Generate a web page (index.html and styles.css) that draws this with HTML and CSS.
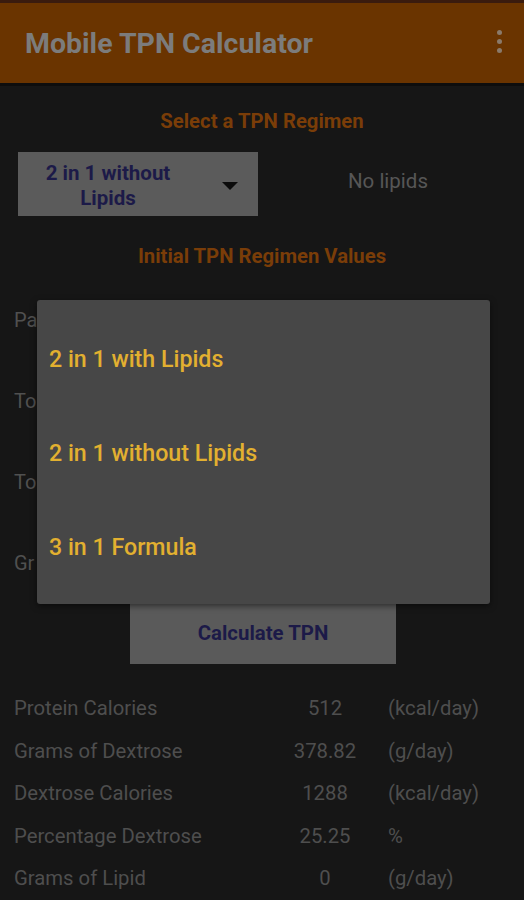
FILE: index.html
```html
<!DOCTYPE html>
<html>
<head>
<meta charset="utf-8">
<link rel="stylesheet" href="styles.css">
</head>
<body>
<div class="screen">
  <div class="statusbar"></div>
  <header class="appbar">
    <span class="title">Mobile TPN Calculator</span>
    <span class="menu"><i></i><i></i><i></i></span>
  </header>
  <div class="appbar-shadow"></div>
  <main class="content">
    <h2 class="section-title first">Select a TPN Regimen</h2>
    <div class="regimen-row">
      <div class="spinner">
        <span class="spinner-text">2 in 1 without<br>Lipids</span>
        <span class="caret"></span>
      </div>
      <div class="regimen-note">No lipids</div>
    </div>
    <h2 class="section-title second">Initial TPN Regimen Values</h2>
    <div class="inputs">
      <div class="input-row">Pa</div>
      <div class="input-row">To</div>
      <div class="input-row">To</div>
      <div class="input-row">Gr</div>
    </div>
    <div class="calc-wrap">
      <div class="calc-btn">Calculate TPN</div>
    </div>
    <div class="results">
      <div class="result"><span class="r-label">Protein Calories</span><span class="r-value">512</span><span class="r-unit">(kcal/day)</span></div>
      <div class="result"><span class="r-label">Grams of Dextrose</span><span class="r-value">378.82</span><span class="r-unit">(g/day)</span></div>
      <div class="result"><span class="r-label">Dextrose Calories</span><span class="r-value">1288</span><span class="r-unit">(kcal/day)</span></div>
      <div class="result"><span class="r-label">Percentage Dextrose</span><span class="r-value">25.25</span><span class="r-unit">%</span></div>
      <div class="result"><span class="r-label">Grams of Lipid</span><span class="r-value">0</span><span class="r-unit">(g/day)</span></div>
    </div>
  </main>
  <div class="popup">
    <div class="popup-item">2 in 1 with Lipids</div>
    <div class="popup-item">2 in 1 without Lipids</div>
    <div class="popup-item">3 in 1 Formula</div>
  </div>
</div>
</body>
</html>
```

FILE: styles.css
```css
* { box-sizing: border-box; margin: 0; padding: 0; }
html, body { background: #161616; }
body { font-family: Roboto, "Noto Sans", sans-serif; }
.screen { position: relative; width: 524px; height: 900px; overflow: hidden; background: #161616; }
.statusbar { height: 3px; background: #3a1b0e; }
.appbar { height: 80px; background: #6a3400; display: flex; align-items: center; justify-content: space-between; padding: 0 22px 0 25px; }
.title { color: #7c7c7c; font-size: 28.5px; font-weight: 700; letter-spacing: 0; margin-top: 0; }
.menu { display: flex; flex-direction: column; gap: 4px; margin-top: -4px; }
.menu i { display: block; width: 5px; height: 5px; border-radius: 50%; background: #8a7a6a; }
.appbar-shadow { height: 3px; background: #0d0d0d; }
.content { display: flex; flex-direction: column; }
.section-title { text-align: center; color: #7a3d08; font-size: 20.3px; font-weight: 700; }
.section-title.first { margin-top: 23px; line-height: 24px; }
.regimen-row { display: flex; align-items: center; margin-top: 19px; padding-left: 18px; }
.spinner { width: 240px; height: 64px; background: #5b5b5b; display: flex; align-items: center; padding-left: 18px; padding-right: 20px; justify-content: space-between; }
.spinner-text { color: #1c1a48; font-size: 20.5px; font-weight: 700; text-align: center; line-height: 25px; width: 144px; margin-top: 3px; }
.caret { width: 0; height: 0; border-left: 8px solid transparent; border-right: 8px solid transparent; border-top: 8px solid #0b0b0b; margin-top: 4px; }
.regimen-note { flex: 1; text-align: center; color: #565656; font-size: 20.5px; margin-right: 6px; margin-bottom: 6px; }
.section-title.second { margin-top: 28px; line-height: 24px; }
.inputs { margin-top: 40px; padding-left: 14px; display: flex; flex-direction: column; }
.input-row { height: 81px; color: #505050; font-size: 20px; line-height: 24px; }
.calc-wrap { display: flex; justify-content: center; margin-top: -30px; padding-left: 2px; }
.calc-btn { width: 266px; height: 62px; background: #5a5a5a; color: #1c1a48; font-size: 20.4px; font-weight: 700; display: flex; align-items: center; justify-content: center; }
.results { margin-top: 23px; display: flex; flex-direction: column; }
.result { display: flex; align-items: center; height: 42.5px; color: #4e4e4e; font-size: 20.3px; }
.r-label { width: 275px; padding-left: 14px; }
.r-value { width: 100px; text-align: center; }
.r-unit { padding-left: 13px; }
.popup { position: absolute; left: 37px; top: 300px; width: 453px; height: 304px; background: #474747; border-radius: 3px; box-shadow: 0 2px 6px rgba(0,0,0,0.5); padding-top: 12px; }
.popup-item { height: 94px; display: flex; align-items: center; padding-left: 12px; color: #e2b030; font-size: 23.2px; font-weight: 500; }
```
